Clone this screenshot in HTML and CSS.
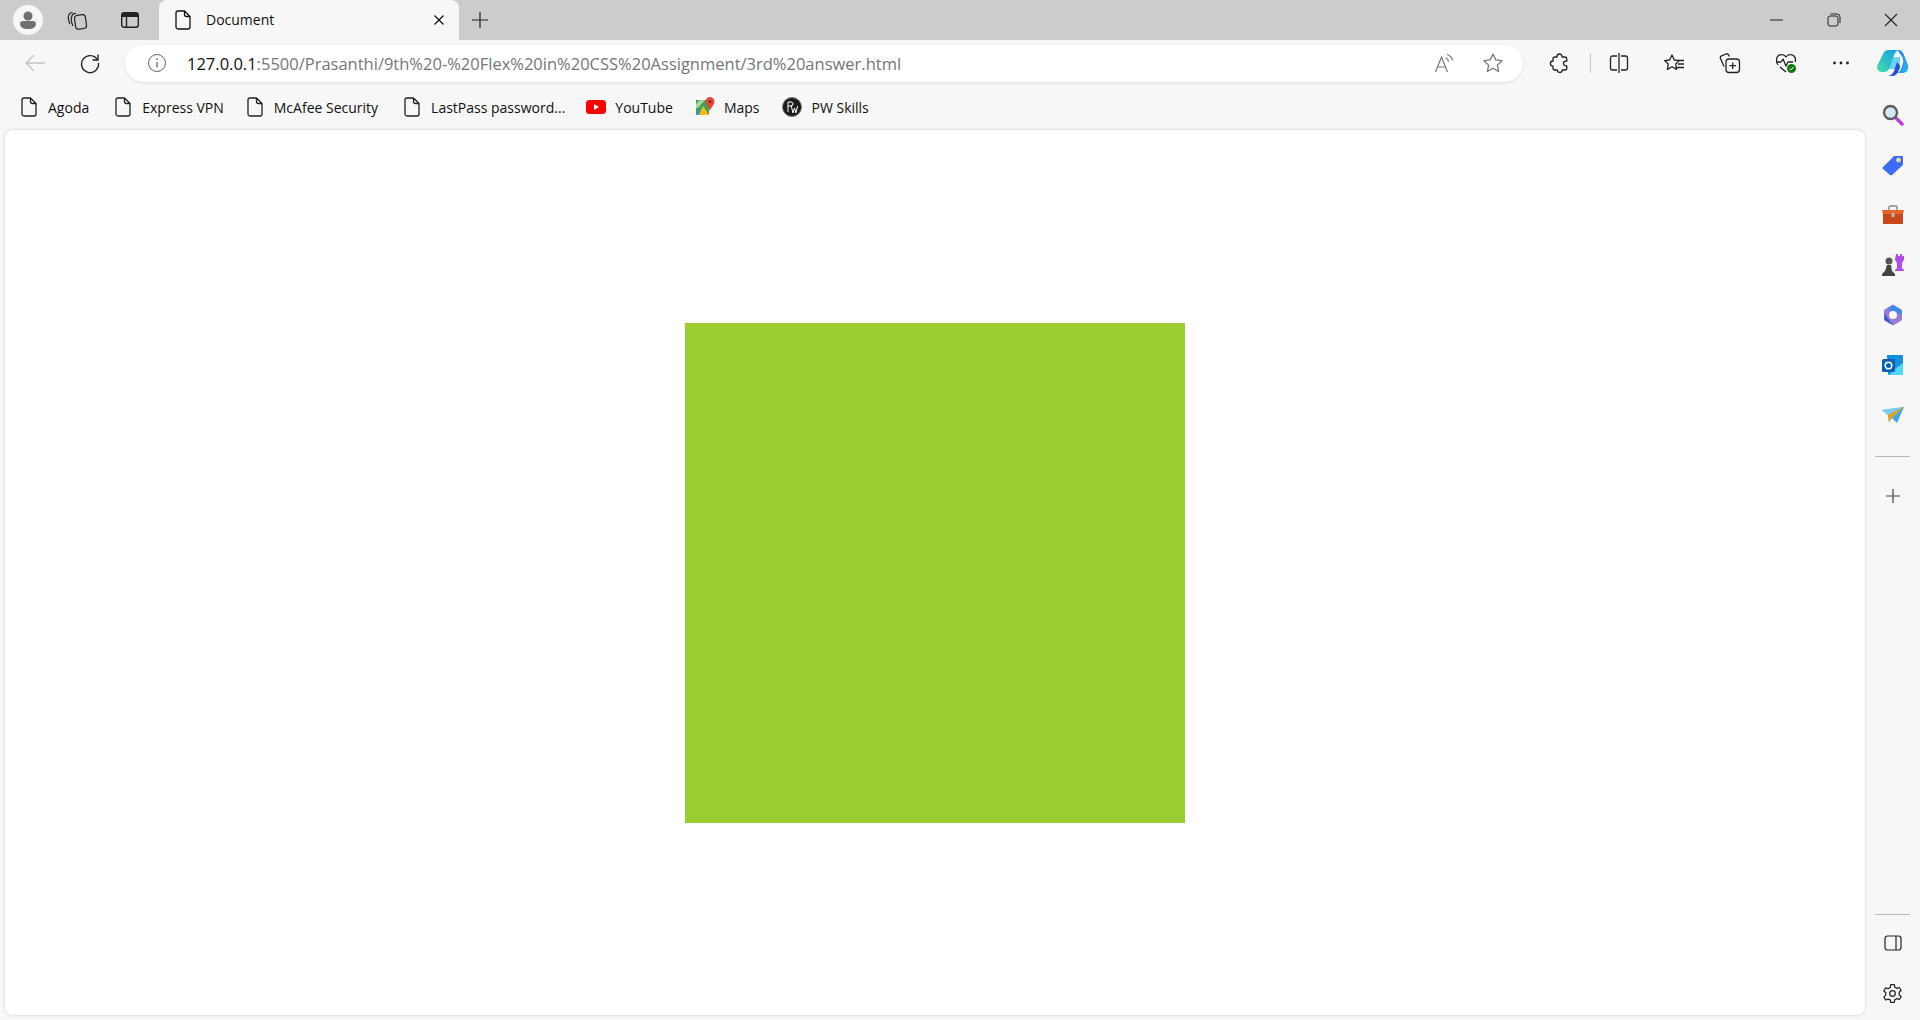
FILE: index.html
```html
<!DOCTYPE html>
<html lang="en">
<head>
  <meta charset="UTF-8">
  <title>Document</title>
  <link rel="stylesheet" href="styles.css">
</head>
<body>
  <svg class="defs" width="0" height="0">
    <symbol id="doc" viewBox="0 0 16 20">
      <path d="M3 1h6.500L15 6.500V17a2 2 0 0 1-2 2H3a2 2 0 0 1-2-2V3a2 2 0 0 1 2-2zM9.500 1v3.500a2 2 0 0 0 2 2H15" fill="none" stroke="currentColor" stroke-width="1.3" stroke-linejoin="round"/>
    </symbol>
  </svg>

  <div class="tabstrip">
    <div class="profile">
      <svg width="30" height="30" viewBox="0 0 30 30"><circle cx="15" cy="15" r="15" fill="#f7f7f7"/><circle cx="15" cy="11" r="4.5" fill="#707070"/><path d="M7 19a3 3 0 0 1 3-3h10a3 3 0 0 1 3 3c0 3-3 5-8 5s-8-2-8-5z" fill="#707070"/></svg>
    </div>
    <div class="strip-btn">
      <svg width="22" height="22" viewBox="0 0 22 22" fill="none" stroke="#222" stroke-width="1.2"><path d="M4 15C2 11 2 8 3 5.5 3.600 4 5 3.500 6.500 3.500"/><path d="M7 17C5 13 5 9 6 6.500 6.600 5 8 4.300 10 4.500"/><rect x="9" y="6" width="11" height="14" rx="3" transform="rotate(-8 14 13)"/></svg>
    </div>
    <div class="strip-btn">
      <svg width="20" height="20" viewBox="0 0 20 20"><rect x="1.700" y="2.700" width="16.600" height="14.600" rx="2.500" fill="none" stroke="#222" stroke-width="1.400"/><path d="M2 5a2 2 0 0 1 2-2h12a2 2 0 0 1 2 2v2H2z" fill="#222"/><path d="M6.500 7v10" stroke="#222" stroke-width="1.400"/></svg>
    </div>
    <div class="tab">
      <svg class="tab-icon" width="16" height="20"><use href="#doc"/></svg>
      <span class="tab-title">Document</span>
      <svg class="tab-close" width="12" height="12" viewBox="0 0 12 12"><path d="M1.500 1.500l9 9M10.500 1.500l-9 9" stroke="#111" stroke-width="1.300"/></svg>
    </div>
    <div class="new-tab">
      <svg width="18" height="18" viewBox="0 0 18 18"><path d="M9 1v16M1 9h16" stroke="#222" stroke-width="1.200"/></svg>
    </div>
    <div class="window-btns">
      <svg width="14" height="14" viewBox="0 0 14 14"><path d="M0 7h13" stroke="#222" stroke-width="1"/></svg>
      <svg width="14" height="14" viewBox="0 0 14 14" fill="none" stroke="#222"><rect x="1" y="3" width="10" height="10" rx="2"/><path d="M3.500 1h6.500a3 3 0 0 1 3 3v6"/></svg>
      <svg width="14" height="14" viewBox="0 0 14 14"><path d="M1 1l12 12M13 1L1 13" stroke="#222" stroke-width="1.100"/></svg>
    </div>
  </div>

  <div class="toolbar">
    <div class="nav-btn">
      <svg width="20" height="18" viewBox="0 0 20 18" fill="none" stroke="#c4c4c4" stroke-width="1.300"><path d="M20 9H1M9 1L1 9l8 8"/></svg>
    </div>
    <div class="nav-btn">
      <svg width="22" height="22" viewBox="0 0 22 22" fill="none" stroke="#222" stroke-width="1.400"><path d="M18.500 8A8.500 8.500 0 1 0 19.500 11"/><path d="M19 2.500V8h-5.500"/></svg>
    </div>
    <div class="address">
      <svg class="info" width="20" height="20" viewBox="0 0 20 20" fill="none" stroke="#666"><circle cx="10" cy="10" r="8.500"/><path d="M10 9v5.500" stroke-width="1.300"/><circle cx="10" cy="6.200" r=".5" fill="#666"/></svg>
      <div class="url"><span class="host">127.0.0.1</span>:5500/Prasanthi/9th%20-%20Flex%20in%20CSS%20Assignment/3rd%20answer.html</div>
      <svg class="read" width="20" height="20" viewBox="0 0 20 20" fill="none" stroke="#777" stroke-width="1.200"><path d="M1.500 19L7.500 4l6 15M3.500 14h8"/><path d="M11.500 5a4 4 0 0 1 3 3.500M13 1.500A7.500 7.500 0 0 1 18.500 7.500"/></svg>
      <svg class="star" width="22" height="22" viewBox="0 0 22 22" fill="none" stroke="#777" stroke-width="1.300" stroke-linejoin="round"><path d="M11 2l2.800 5.900 6.200.8-4.600 4.400 1.200 6.400L11 16.300l-5.600 3.200 1.200-6.400L2 8.700l6.200-.8z"/></svg>
    </div>
    <div class="tools">
      <svg class="tool" width="20" height="20" viewBox="0 0 20 20" fill="none" stroke="#222" stroke-width="1.300" stroke-linejoin="round"><path d="M8 3.500a2.500 2.500 0 0 1 5 0V4h3a2 2 0 0 1 1.800 2v2.200h-1a2.300 2.300 0 0 0 0 4.600h1V15a2 2 0 0 1-2 2h-2.500a2.500 2.500 0 0 1-5 0H6a2 2 0 0 1-2-2v-1.800a2.600 2.600 0 0 1 0-5.200V6a2 2 0 0 1 2-2h2z"/></svg>
      <span class="tool-sep"></span>
      <svg class="tool" width="20" height="20" viewBox="0 0 20 20" fill="none" stroke="#222" stroke-width="1.300"><path d="M8 3H3.500A2 2 0 0 0 1.500 5v10a2 2 0 0 0 2 2H8M12 3h4.500a2 2 0 0 1 2 2v10a2 2 0 0 1-2 2H12M10 0v20"/></svg>
      <svg class="tool" width="22" height="20" viewBox="0 0 22 20" fill="none" stroke="#222" stroke-width="1.300" stroke-linejoin="round"><path d="M9 2l2.300 5 5 .6-3.600 3.400.9 5.400L9 13.700l-4.600 2.700.9-5.400L1.500 7.600l5-.6zM15 7.500h6M15 11h6M13 14.500h8"/></svg>
      <svg class="tool" width="22" height="22" viewBox="0 0 22 22" fill="none" stroke="#222" stroke-width="1.300" stroke-linejoin="round"><path d="M5 14.500L1.500 6.500a2 2 0 0 1 1-2.600L7 2a2 2 0 0 1 2.600 1l.6 1.500"/><rect x="7" y="7" width="13.500" height="13.500" rx="3"/><path d="M13.700 10.500v6.500M10.500 13.700H17" /></svg>
      <svg class="tool" width="22" height="22" viewBox="0 0 22 22" fill="none" stroke="#222" stroke-width="1.300" stroke-linejoin="round"><path d="M3 13C1 10 1 6 3 4s6-2 8 1c2-3 6-3 8-1 1.500 1.500 1.800 4 1 6"/><path d="M1.500 10H6l2-3 3 7 2-4h5M5 15l6 5"/><circle cx="16.500" cy="16.500" r="4.500" fill="#107c10" stroke="none"/><path d="M14.500 16.500l1.500 1.500 2.500-3" stroke="#fff" stroke-width="1"/></svg>
      <svg class="tool" width="20" height="20" viewBox="0 0 20 20" fill="#222"><circle cx="3.500" cy="10" r="1.400"/><circle cx="10" cy="10" r="1.400"/><circle cx="16.500" cy="10" r="1.400"/></svg>
      <svg class="copilot" width="32" height="28" viewBox="0 0 32 28">
        <defs>
          <linearGradient id="cp-left" x1="0" y1="1" x2="1" y2="0"><stop offset="0" stop-color="#3fe0a8"/><stop offset="1" stop-color="#1a9be8"/></linearGradient>
          <linearGradient id="cp-right" x1="0" y1="0" x2="1" y2="1"><stop offset="0" stop-color="#1a7fe0"/><stop offset="1" stop-color="#2fb6f2"/></linearGradient>
        </defs>
        <path d="M13 8h10v12H10z" fill="#6fd0f5"/>
        <path d="M11 1h10c-3 2-4 5-5 8l-3 9c-1 3-3 5-6 5H5C1 23-1 19 1 15L6 5c1-3 3-4 5-4z" fill="url(#cp-left)"/>
        <path d="M21 1c3 0 5 2 6 5l4 10c1 4-1 8-5 8h-6c3-1 4-4 5-7l1-3c1-4-1-7-3-9-1-2-2-3-2-4z" fill="url(#cp-right)"/>
        <path d="M10 27c3 0 6-2 7-5l3-9 3 4c-1 5-3 10-8 10z" fill="#2a4fd0"/>
      </svg>
    </div>
  </div>

  <div class="main">
    <div class="left">
      <div class="bookmarks">
        <div class="mark mark-doc mark-wide"><svg class="doc" width="16" height="20"><use href="#doc"/></svg>Agoda</div>
        <div class="mark mark-doc"><svg class="doc" width="16" height="20"><use href="#doc"/></svg>Express VPN</div>
        <div class="mark mark-doc mark-wide"><svg class="doc" width="16" height="20"><use href="#doc"/></svg>McAfee Security</div>
        <div class="mark"><svg class="doc" width="16" height="20"><use href="#doc"/></svg>LastPass password...</div>
        <div class="mark mark-icon">
          <svg width="20" height="14" viewBox="0 0 20 14"><rect width="20" height="14" rx="3.500" fill="#f00"/><path d="M8 4l5 3-5 3z" fill="#fff"/></svg>
          YouTube
        </div>
        <div class="mark mark-icon">
          <svg width="19" height="20" viewBox="0 0 19 20"><path d="M0 3h13v15H0z" fill="#35a853"/><path d="M0 18L7 9l6 9z" fill="#4a8df6"/><path d="M7 9l6 9H3z" fill="#fbbc04"/><path d="M4 3h5L2 11H0V7z" fill="#a8d5a2"/><path d="M14 0a4.500 4.500 0 0 1 4.500 4.500C18.500 8 15 10 14 14c-1-4-4.500-6-4.500-9.500A4.500 4.500 0 0 1 14 0z" fill="#e8463a"/><circle cx="14" cy="4.500" r="1.500" fill="#8c1d18"/></svg>
          Maps
        </div>
        <div class="mark mark-icon">
          <svg width="20" height="20" viewBox="0 0 20 20"><circle cx="10" cy="10" r="9.500" fill="#1c1c1c" stroke="#777"/><path d="M6 15V5h3a2 2 0 0 1 0 4H6M9 8l2 8 1.500-5 1.500 5 1.500-7" fill="none" stroke="#fff"/></svg>
          PW Skills
        </div>
      </div>
      <div class="page">
        <div class="box"></div>
      </div>
    </div>

    <div class="sidebar">
      <div class="side-icons">
        <div class="side-item"><svg width="22" height="22" viewBox="0 0 22 22"><path d="M13 13l7 7" stroke="#c43ae0" stroke-width="3.400" stroke-linecap="round"/><circle cx="8.500" cy="8.500" r="6.500" fill="#cfeaf8" stroke="#5c5c5c" stroke-width="2.400"/></svg></div>
        <div class="side-item"><svg width="22" height="22" viewBox="0 0 22 22"><path d="M1 13L12 2h8a1 1 0 0 1 1 1v8L10 21a1.500 1.500 0 0 1-2 0L1 15a1.400 1.400 0 0 1 0-2z" fill="#3f6cf4"/><circle cx="16.500" cy="6" r="2" fill="#f5d34a" stroke="#fff" stroke-width=".6"/></svg></div>
        <div class="side-item"><svg width="24" height="20" viewBox="0 0 24 20"><path d="M8 5V2.500A1.500 1.500 0 0 1 9.500 1h5A1.500 1.500 0 0 1 16 2.500V5" fill="none" stroke="#8a8a8a" stroke-width="1.500"/><path d="M1 5h22l-1 4H2z" fill="#e8622a"/><path d="M2 9h20v9a1 1 0 0 1-1 1H3a1 1 0 0 1-1-1z" fill="#c8461a"/><rect x="10.500" y="8" width="3" height="4" fill="#bbb"/></svg></div>
        <div class="side-item"><svg width="24" height="24" viewBox="0 0 24 24"><path d="M15 1h2v2h2V1h2v2h2v4l-2 3v5l2 2v1h-9v-1l2-2v-5l-2-3z" fill="#b14ee8"/><circle cx="8" cy="8" r="3.500" fill="#555"/><path d="M6 12h4l1 6 3 3v2H1v-2l3-3z" fill="#444"/></svg></div>
        <div class="side-item"><svg width="22" height="22" viewBox="0 0 22 22"><path d="M11 1l8.500 5v10L11 21l-8.500-5V6z" fill="#9a7ad8" stroke="#9a7ad8" stroke-linejoin="round"/><path d="M11 1l8.500 5v5L11 7 5 6z" fill="#3f8ce8"/><path d="M2.500 9L6 15l5 6-8.500-5z" fill="#3558c8"/><circle cx="11" cy="11" r="4" fill="#f7f7f7"/></svg></div>
        <div class="side-item"><svg width="22" height="22" viewBox="0 0 22 22"><path d="M5 1h15a1 1 0 0 1 1 1v18a1 1 0 0 1-1 1H7a1 1 0 0 1-1-1z" fill="#1490df"/><path d="M21 9v11a1 1 0 0 1-1 1H7l7-7z" fill="#50d9ff"/><rect x="0" y="5" width="13" height="13" rx="1.500" fill="#0a5fb4"/><circle cx="6.500" cy="11.500" r="3.300" fill="none" stroke="#fff" stroke-width="1.600"/></svg></div>
        <div class="side-item"><svg width="22" height="16" viewBox="0 0 22 16"><path d="M0 3l22-3-7 16-5-5-3 4-1-7z" fill="#3ea6f0"/><path d="M0 3l22-3L6 8z" fill="#7ccaf5"/><path d="M6 8l16-8-12 11-3 4z" fill="#e8a215"/></svg></div>
      </div>
      <div class="side-sep"></div>
      <svg class="side-add" width="16" height="16" viewBox="0 0 16 16"><path d="M8 1v14M1 8h14" stroke="#444" stroke-width="1.200"/></svg>
      <div class="side-bottom">
        <div class="side-sep"></div>
        <svg class="side-panel-icon" width="18" height="16" viewBox="0 0 18 16" fill="none" stroke="#222" stroke-width="1.200"><rect x="1" y="1" width="16" height="14" rx="2.500"/><path d="M12 1v14"/></svg>
        <svg class="side-gear" width="21" height="21" viewBox="0 0 24 24" fill="none" stroke="#222" stroke-width="1.400" stroke-linejoin="round"><circle cx="12" cy="12" r="3.200"/><path d="M10 1.800h4l.6 3 2.400 1.300 2.900-1 2 3.500-2.300 2a7 7 0 0 1 0 2.800l2.300 2-2 3.500-2.900-1-2.400 1.300-.6 3h-4l-.6-3L7 18.400l-2.900 1-2-3.500 2.300-2a7 7 0 0 1 0-2.800l-2.300-2 2-3.500 2.900 1 2.400-1.300z"/></svg>
      </div>
    </div>
  </div>
</body>
</html>
```

FILE: styles.css
```css
* {
  box-sizing: border-box;
}

body {
  margin: 0;
  height: 100vh;
  display: flex;
  flex-direction: column;
  overflow: hidden;
  background-color: #f7f7f7;
  color: #111;
  font-family: "Open Sans", "Liberation Sans", sans-serif;
  font-size: 14px;
}

svg {
  display: block;
  flex: none;
}

.defs {
  position: absolute;
}

/* tab strip */
.tabstrip {
  height: 40px;
  flex: none;
  display: flex;
  align-items: center;
  background-color: #cccccc;
  padding-left: 13px;
}

.profile {
  width: 30px;
  margin-right: 23px;
}

.strip-btn {
  width: 22px;
  display: flex;
  justify-content: center;
  margin-right: 31px;
}

.strip-btn + .tab {
  margin-left: -13px;
}

.tab {
  width: 300px;
  height: 40px;
  display: flex;
  align-items: center;
  padding: 0 14px 0 16px;
  background-color: #f7f7f7;
  border-radius: 8px 8px 0 0;
}

.tab-title {
  flex: 1;
  margin: 0 0 2px 15px;
  font-size: 14px;
}

.new-tab {
  margin-left: 12px;
}

.window-btns {
  margin-left: auto;
  display: flex;
  align-items: center;
  gap: 43px;
  padding-right: 22px;
}

/* address row */
.toolbar {
  height: 46px;
  flex: none;
  display: flex;
  align-items: center;
  padding-left: 10px;
}

.nav-btn {
  width: 50px;
  display: flex;
  justify-content: center;
  margin-right: 5px;
}

.address {
  width: 1398px;
  height: 37px;
  margin-left: 5px;
  display: flex;
  align-items: center;
  padding: 0 19px 0 22px;
  background-color: #fff;
  border-radius: 19px;
  box-shadow: 0 1px 3px rgba(0, 0, 0, 0.1);
}

.url {
  flex: 1;
  margin: 1px 0 0 20px;
  font-size: 16.5px;
  color: #767676;
  white-space: nowrap;
}

.host {
  color: #111;
}

.read {
  margin-right: 28px;
}

.tools {
  flex: 1;
  display: flex;
  align-items: center;
  padding-left: 26px;
}

.tool {
  margin-right: 34px;
}

.tool-sep {
  width: 1px;
  height: 20px;
  margin: 0 18px 0 -13px;
  background-color: #c8c8c8;
}

.copilot {
  margin-left: -8px;
}

/* below the address row */
.main {
  flex: 1;
  display: flex;
  min-height: 0;
}

.left {
  flex: 1;
  display: flex;
  flex-direction: column;
  min-width: 0;
}

.bookmarks {
  height: 44px;
  flex: none;
  display: flex;
  align-items: center;
  gap: 21px;
  padding: 0 0 2px 21px;
  font-size: 14px;
}

.mark {
  display: flex;
  align-items: center;
  gap: 11px;
}

.mark-doc {
  margin-right: 2px;
}

.mark-wide {
  margin-right: 5px;
}

.mark-icon {
  gap: 9px;
  margin-right: 2px;
}

.doc {
  color: #222;
}

.page {
  flex: 1;
  margin: 0 0 5px 5px;
  display: flex;
  align-items: center;
  justify-content: center;
  background-color: #fff;
  border-radius: 8px;
  box-shadow: 0 0 3px rgba(0, 0, 0, 0.18);
}

.box {
  width: 500px;
  height: 500px;
  background-color: yellowgreen;
}

/* right rail */
.sidebar {
  width: 55px;
  flex: none;
  display: flex;
  flex-direction: column;
  align-items: center;
  padding-top: 4px;
}

.side-item {
  width: 55px;
  height: 50px;
  display: flex;
  align-items: center;
  justify-content: center;
}

.side-sep {
  width: 35px;
  height: 1px;
  margin-top: 16px;
  background-color: #b8b8b8;
}

.side-add {
  margin-top: 31px;
}

.side-bottom {
  margin-top: auto;
  display: flex;
  flex-direction: column;
  align-items: center;
  padding-bottom: 16px;
}

.side-panel-icon {
  margin-top: 20px;
}

.side-gear {
  margin-top: 32px;
}
```
